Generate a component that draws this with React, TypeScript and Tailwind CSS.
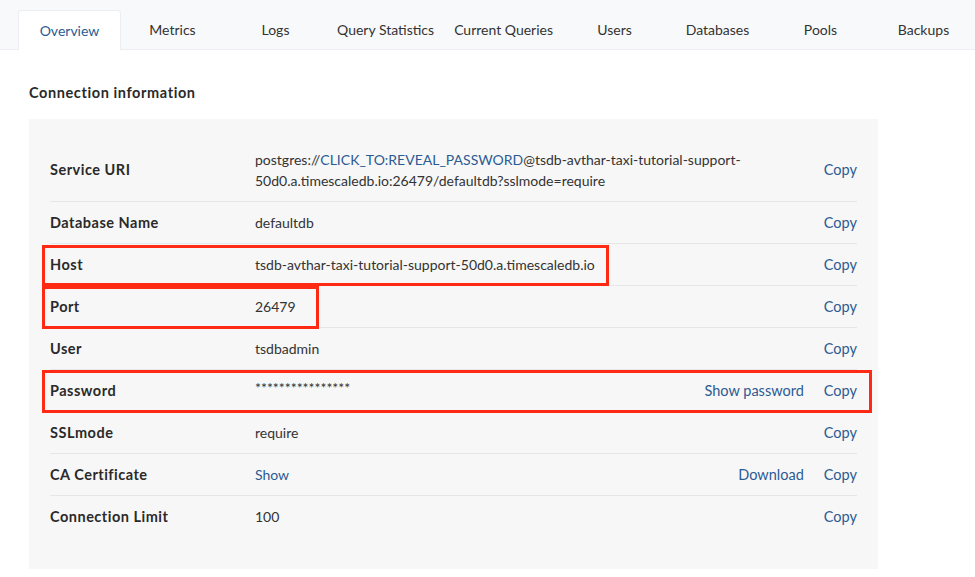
import React from "react";

const tabs = [
  "Overview",
  "Metrics",
  "Logs",
  "Query Statistics",
  "Current Queries",
  "Users",
  "Databases",
  "Pools",
  "Backups",
];

interface Row {
  label: string;
  value: React.ReactNode;
  extra?: string;
  box?: string;
}

const rows: Row[] = [
  {
    label: "Service URI",
    value: (
      <>
        postgres://<span className="text-[#2b5b93]">CLICK_TO:REVEAL_PASSWORD</span>
        @tsdb-avthar-taxi-tutorial-support-
        <br />
        50d0.a.timescaledb.io:26479/defaultdb?sslmode=require
      </>
    ),
  },
  { label: "Database Name", value: "defaultdb" },
  {
    label: "Host",
    value: "tsdb-avthar-taxi-tutorial-support-50d0.a.timescaledb.io",
    box: "top-[1px] h-[41px] w-[567px]",
  },
  { label: "Port", value: "26479", box: "top-0 h-[43px] w-[277px]" },
  { label: "User", value: "tsdbadmin" },
  {
    label: "Password",
    value: <span className="relative -top-[3px]">****************</span>,
    extra: "Show password",
    box: "top-0 h-[43px] w-[830px]",
  },
  { label: "SSLmode", value: "require" },
  {
    label: "CA Certificate",
    value: <span className="text-[#2b5b93]">Show</span>,
    extra: "Download",
  },
  { label: "Connection Limit", value: "100" },
];

export default function App() {
  return (
    <div
      className="min-h-[577px] bg-white text-[#333] text-[14px]"
      style={{ fontFamily: "Lato, 'Open Sans', sans-serif" }}
    >
      <div className="flex h-[50px] items-end border-b border-[#eceef1] bg-[#f8f9fb] pl-[18px]">
        {tabs.map((t, i) => (
          <div
            key={t}
            className={`flex h-[40px] min-w-[103px] items-center justify-center whitespace-nowrap px-[11px] ${
              i === 0
                ? "-mb-px rounded-t-[3px] border border-b-0 border-[#eceef1] bg-white text-[#2b5b93]"
                : "text-[#333]"
            }`}
          >
            {t}
          </div>
        ))}
      </div>

      <div className="px-[29px] pt-[32px]">
        <h2 className="text-[14.5px] font-bold tracking-[0.6px] text-[#2a2a2a]">
          Connection information
        </h2>

        <div className="mt-[15px] w-[849px] bg-[#f7f7f7] px-[21px] pb-[32px] pt-[20px]">
          {rows.map((r, i) => (
            <div
              key={r.label}
              className={`relative flex items-center py-[10px] leading-[21px] ${
                i < rows.length - 1 ? "border-b border-[#e6e6e6]" : ""
              }`}
            >
              <div className="w-[205px] shrink-0 text-[14.5px] font-bold tracking-[0.5px] text-[#2a2a2a]">
                {r.label}
              </div>
              <div className="flex-1">{r.value}</div>
              {r.extra && (
                <span className="mr-[20px] text-[14.5px] text-[#2b5b93]">{r.extra}</span>
              )}
              <span className="text-[14.5px] text-[#2b5b93]">Copy</span>
              {r.box && (
                <div
                  className={`pointer-events-none absolute -left-[8px] border-[3px] border-[#ff2a14] ${r.box}`}
                />
              )}
            </div>
          ))}
        </div>
      </div>
    </div>
  );
}
